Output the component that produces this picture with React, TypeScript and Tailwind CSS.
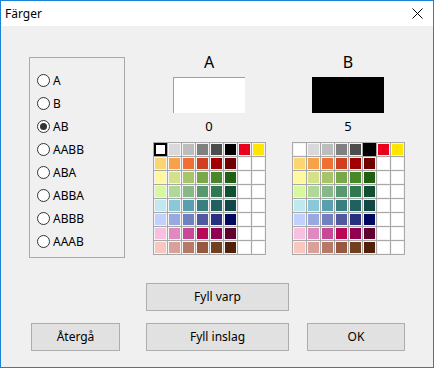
import React from "react";

const W = "#ffffff";
const palette: string[][] = [
  ["#ffffff", "#d9d9d9", "#bdbdbd", "#808080", "#4d4d4d", "#000000", "#e8001c", "#ffe600"],
  ["#fcd470", "#f7a148", "#ef7030", "#d04020", "#a00000", "#700000", W, W],
  ["#fff8a0", "#d4e08a", "#a8c468", "#78a848", "#488828", "#206010", W, W],
  ["#d8f8a0", "#b0d898", "#88b888", "#589870", "#307850", "#105030", W, W],
  ["#c0e8f0", "#88c8d8", "#58a0b0", "#388080", "#206060", "#104848", W, W],
  ["#c0d0ff", "#98a8e0", "#7080c0", "#5058a0", "#283080", "#000860", W, W],
  ["#f8c0e0", "#e088c0", "#c84898", "#b80858", "#900050", "#600030", W, W],
  ["#f8c8c0", "#d8a098", "#b87868", "#985840", "#704020", "#502008", W, W],
];

function Grid({ selected }: { selected: number }) {
  return (
    <div className="grid grid-cols-[repeat(8,13px)] gap-px bg-[#a8a8a8] border border-[#a8a8a8] w-fit">
      {palette.flat().map((c, i) => (
        <div key={i} className="relative w-[13px] h-[13px] border border-[#f4f4f4]" style={{ backgroundColor: c }}>
          {i === selected && (
            <div className="absolute -inset-[1px] border-2 border-black" />
          )}
        </div>
      ))}
    </div>
  );
}

function Radio({ label, checked }: { label: string; checked?: boolean }) {
  return (
    <div className="h-[23px] flex items-center">
      <div className="w-[13px] h-[13px] rounded-full border border-[#333333] bg-white flex items-center justify-center">
        {checked && <div className="w-[7px] h-[7px] rounded-full bg-[#333333]" />}
      </div>
      <span className="ml-[3px] text-[12px] text-black leading-none">{label}</span>
    </div>
  );
}

function Column({ title, swatch, value, selected }: { title: string; swatch: string; value: string; selected: number }) {
  return (
    <div className="flex flex-col items-center w-[114px]">
      <div className="h-[22px] text-[16px] leading-[22px] text-black">{title}</div>
      <div
        className={`mt-[4px] w-[72px] h-[36px] border-t border-l ${swatch === "white" ? "bg-white border-[#a0a0a0]" : "bg-black border-black"}`}
      />
      <div className="mt-[5px] h-[16px] text-[13px] leading-[16px] text-black">{value}</div>
      <div className="mt-[8px]">
        <Grid selected={selected} />
      </div>
    </div>
  );
}

function Btn({ label, w }: { label: string; w: string }) {
  return (
    <div className={`${w} h-[28px] bg-[#e1e1e1] border border-[#adadad] flex items-center justify-center text-[12px] text-black`}>
      {label}
    </div>
  );
}

export default function App() {
  return (
    <div
      className="w-[434px] h-[368px] border border-[#1883d7] bg-[#f0f0f0] flex flex-col overflow-hidden"
      style={{ fontFamily: '"Noto Sans", "Open Sans", sans-serif' }}
    >
      <div className="h-[25px] bg-white flex items-center justify-between pl-[4px] pr-[10px]">
        <span className="text-[12px] text-black">Färger</span>
        <svg width="11" height="11" viewBox="0 0 11 11">
          <path d="M0.5 0.5 L10.5 10.5 M10.5 0.5 L0.5 10.5" stroke="#000" strokeWidth="1" fill="none" />
        </svg>
      </div>
      <div className="flex-1 flex flex-col pt-[25px]">
        <div className="h-[207px] flex items-start pl-[28px]">
          <div className="mt-[6px] w-[96px] h-[201px] border border-[#a9a9a9] pl-[7px] pt-[11px] flex flex-col">
            <Radio label="A" />
            <Radio label="B" />
            <Radio label="AB" checked />
            <Radio label="AABB" />
            <Radio label="ABA" />
            <Radio label="ABBA" />
            <Radio label="ABBB" />
            <Radio label="AAAB" />
          </div>
          <div className="ml-[27px]">
            <Column title="A" swatch="white" value="0" selected={0} />
          </div>
          <div className="ml-[25px]">
            <Column title="B" swatch="black" value="5" selected={5} />
          </div>
        </div>
        <div className="mt-[25px] pl-[145px]">
          <Btn label="Fyll varp" w="w-[143px]" />
        </div>
        <div className="mt-[12px] flex pl-[30px]">
          <Btn label="Återgå" w="w-[89px]" />
          <div className="ml-[26px]">
            <Btn label="Fyll inslag" w="w-[143px]" />
          </div>
          <div className="ml-[18px]">
            <Btn label="OK" w="w-[98px]" />
          </div>
        </div>
      </div>
    </div>
  );
}
